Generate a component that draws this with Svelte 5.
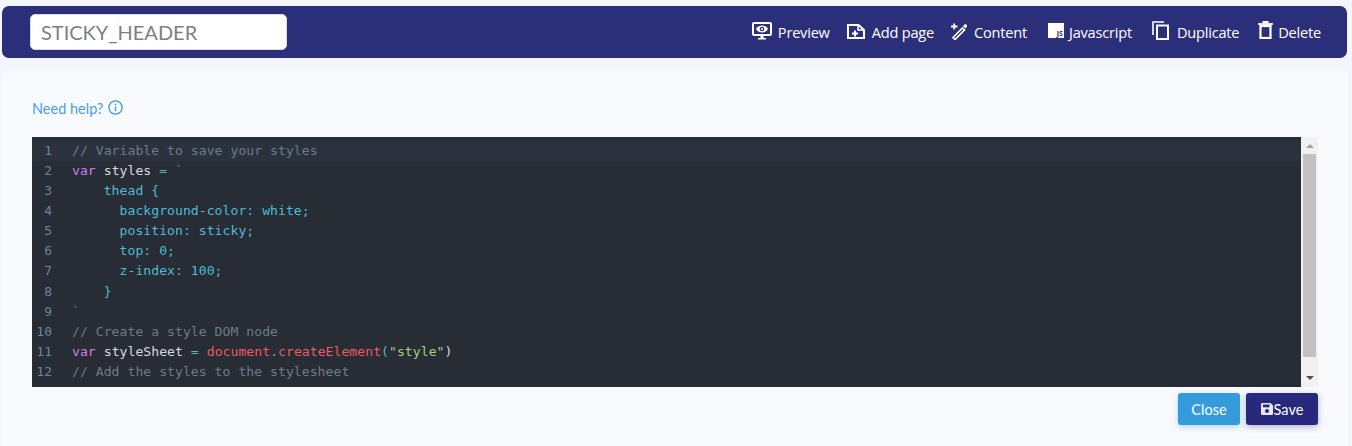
<script>
  const actions = ['Preview', 'Add page', 'Content', 'Javascript', 'Duplicate', 'Delete'];
</script>

<div class="page">
  <header class="topbar">
    <input class="name" value="STICKY_HEADER" />
    <nav class="actions">
      <a class="action preview" href="#p">
        <svg width="20" height="18" viewBox="0 0 20 18">
          <rect x="1" y="1" width="18" height="12" rx="1" fill="none" stroke="#fff" stroke-width="2" />
          <path d="M4 7C5.500 4.400 8 3.500 10 3.500S14.500 4.400 16 7C14.500 9.600 12 10.500 10 10.500S5.500 9.600 4 7z" fill="#fff" />
          <circle cx="10" cy="7" r="2.300" fill="#2b2f7a" />
          <circle cx="10" cy="7" r="1.100" fill="#fff" />
          <path d="M8.500 14h3v2h2.500v1.500H6V16h2.500z" fill="#fff" />
        </svg>
        <span>{actions[0]}</span>
      </a>
      <a class="action add" href="#a">
        <svg width="18" height="15" viewBox="0 0 18 15">
          <path d="M1 1h10.500L17 6v8H1z" fill="none" stroke="#fff" stroke-width="2" />
          <path d="M11 1v5h6" fill="none" stroke="#fff" stroke-width="1.500" />
          <path d="M5 9.500h6M8 6.500v6" stroke="#fff" stroke-width="2" />
        </svg>
        <span>{actions[1]}</span>
      </a>
      <a class="action content" href="#c">
        <svg width="17" height="17" viewBox="0 0 17 17">
          <path d="M2 14.500L11.500 5l2 2L4 16.500z" fill="none" stroke="#fff" stroke-width="1.700" />
          <path d="M12 3l1.500-1.500a1 1 0 0 1 1.500 0l.8.8a1 1 0 0 1 0 1.500L14.500 5.500z" fill="#fff" />
          <path d="M0 3.500h6.500M3.200 .5v6" stroke="#fff" stroke-width="1.800" />
        </svg>
        <span>{actions[2]}</span>
      </a>
      <a class="action js" href="#j">
        <span class="js-icon">JS</span>
        <span>{actions[3]}</span>
      </a>
      <a class="action duplicate" href="#d">
        <svg width="17" height="19" viewBox="0 0 17 19">
          <path d="M1 14V1h11" fill="none" stroke="#fff" stroke-width="1.600" />
          <rect x="5" y="4.500" width="11" height="13.500" fill="none" stroke="#fff" stroke-width="2" />
        </svg>
        <span>{actions[4]}</span>
      </a>
      <a class="action delete" href="#x">
        <svg width="15" height="18" viewBox="0 0 15 18">
          <path d="M0 3h15" stroke="#fff" stroke-width="1.800" />
          <path d="M4.500 1h6" stroke="#fff" stroke-width="2" />
          <rect x="2.500" y="5" width="10" height="12" fill="none" stroke="#fff" stroke-width="2.200" />
        </svg>
        <span>{actions[5]}</span>
      </a>
    </nav>
  </header>

  <section class="panel">
    <div class="help">
      <span>Need help?</span>
      <svg width="15" height="15" viewBox="0 0 15 15">
        <circle cx="7.500" cy="7.500" r="6.600" fill="none" stroke="#3b9ae1" stroke-width="1.300" />
        <path d="M7.500 6.500v4.500" stroke="#3b9ae1" stroke-width="1.400" />
        <circle cx="7.500" cy="4.300" r="0.900" fill="#3b9ae1" />
      </svg>
    </div>

    <div class="editor">
      <div class="gutter">
        {#each Array(12) as _, i}
          <div class:active={i === 0}>{i + 1}</div>
        {/each}
      </div>
      <pre class="code"><div class="active"><i class="c">// Variable to save your styles</i></div><div><b class="k">var</b> styles <b class="o">=</b> <b class="c">`</b></div><div class="s">    thead &#123;</div><div class="s">      background-color: white;</div><div class="s">      position: sticky;</div><div class="s">      top: 0;</div><div class="s">      z-index: 100;</div><div class="s">    &#125;</div><div><b class="c">`</b></div><div><i class="c">// Create a style DOM node</i></div><div><b class="k">var</b> styleSheet <b class="o">=</b> <b class="r">document</b><b class="o">.</b><b class="r">createElement</b><b class="o">(</b><b class="g">"style"</b><b class="w">)</b></div><div><i class="c">// Add the styles to the stylesheet</i></div></pre>
      <div class="scrollbar">
        <span class="arrow up"></span>
        <div class="track"><div class="thumb"></div></div>
        <span class="arrow down"></span>
      </div>
    </div>

    <div class="buttons">
      <button class="btn close">Close</button>
      <button class="btn save">
        <svg width="12" height="12" viewBox="0 0 12 12">
          <path d="M0 1.200A1.200 1.200 0 0 1 1.200 0H9.500L12 2.500v8.300A1.200 1.200 0 0 1 10.800 12H1.200A1.200 1.200 0 0 1 0 10.800z" fill="#e8e9f5" />
          <rect x="2" y="1.500" width="6.500" height="2.800" fill="#272a7c" />
          <circle cx="6" cy="8" r="2" fill="#272a7c" />
        </svg>Save</button>
    </div>
  </section>
</div>

<style>
  :global(body) {
    margin: 0;
    background: #f4f6fb;
    font-family: "Open Sans", sans-serif;
  }

  .page {
    height: 446px;
    overflow: hidden;
    padding: 6px 5px 0 2px;
    box-sizing: border-box;
  }

  .topbar {
    height: 52px;
    background: #2b2f7a;
    border-radius: 7px;
    display: flex;
    align-items: center;
    justify-content: space-between;
    padding: 0 26px 0 28px;
  }

  .name {
    width: 257px;
    height: 36px;
    box-sizing: border-box;
    border: 1px solid #d5d8e6;
    border-radius: 5px;
    background: #fff;
    padding: 0 10px;
    font-family: "Lato", sans-serif;
    font-size: 20px;
    color: #7d7f85;
    outline: none;
  }

  .actions {
    display: flex;
    align-items: center;
  }

  .action {
    display: flex;
    align-items: center;
    color: #fff;
    text-decoration: none;
    font-size: 14.600px;
    letter-spacing: -0.220px;
  }

  .action svg {
    margin-top: -2px;
  }

  .preview { margin-right: 17px; gap: 6px; }
  .add { margin-right: 17px; gap: 7px; }
  .content { margin-right: 21px; gap: 6px; }
  .js { margin-right: 20px; gap: 5px; }
  .duplicate { margin-right: 19px; gap: 8px; }
  .delete { gap: 5px; }

  .duplicate svg, .delete svg {
    margin-top: -4px;
  }

  .js-icon {
    width: 16px;
    height: 15px;
    background: #fff;
    color: #2b2f7a;
    font-size: 7px;
    font-weight: 700;
    line-height: 9px;
    letter-spacing: 0;
    display: flex;
    align-items: flex-end;
    justify-content: flex-end;
    padding-right: 1px;
    box-sizing: border-box;
    margin-top: -3px;
  }

  .panel {
    margin-top: 12px;
    margin-right: -1px;
    height: 376px;
    background: #f9fafe;
    border-radius: 6px 6px 0 0;
    padding: 28px 30px 0 30px;
    box-sizing: border-box;
  }

  .help {
    display: flex;
    align-items: center;
    gap: 5px;
    height: 20px;
    color: #4a9fdf;
    font-family: "Lato", sans-serif;
    font-size: 14.500px;
  }

  .help svg {
    margin-top: -2px;
  }

  .editor {
    margin-top: 19px;
    height: 250px;
    background: #282c34;
    display: flex;
    font-family: "DejaVu Sans Mono", monospace;
    font-size: 13.100px;
    letter-spacing: 0.040px;
    line-height: 20.080px;
    overflow: hidden;
  }

  .gutter {
    width: 40px;
    flex: none;
    padding-top: 4px;
    color: #67879b;
    text-align: right;
    font-size: 13px;
    letter-spacing: 0;
  }

  .gutter div {
    padding-right: 20px;
  }

  .gutter .active, .code .active {
    background: #2c323d;
  }

  .code {
    flex: 1;
    margin: 0;
    padding: 4px 0 0;
    font: inherit;
    letter-spacing: inherit;
    color: #d5dbe2;
  }

  .code i, .code b {
    font-style: normal;
    font-weight: 400;
  }

  .c { color: #6b7b8c; }
  .k { color: #d07ee8; }
  .o { color: #56b6c2; }
  .s { color: #4dbdd4; }
  .r { color: #ec5a66; }
  .g { color: #a2d080; }
  .w { color: #d5dbe2; }

  .scrollbar {
    width: 17px;
    flex: none;
    background: #f1f1f1;
    display: flex;
    flex-direction: column;
    align-items: center;
  }

  .track {
    flex: 1;
    width: 100%;
  }

  .thumb {
    margin: 0 2px;
    height: 203px;
    background: #c1c1c1;
  }

  .arrow {
    flex: none;
    width: 0;
    height: 0;
    border-left: 4px solid transparent;
    border-right: 4px solid transparent;
  }

  .arrow.up {
    margin: 7px 0 6px;
    border-bottom: 4px solid #a3a3a3;
  }

  .arrow.down {
    margin: 5px 0 7px;
    border-top: 4px solid #505050;
  }

  .buttons {
    display: flex;
    justify-content: flex-end;
    gap: 6px;
    margin-top: 6px;
  }

  .btn {
    height: 32px;
    border: none;
    border-radius: 3px;
    color: #fff;
    font-family: "Lato", sans-serif;
    font-size: 14.500px;
    padding: 0;
  }

  .close {
    width: 62px;
    background: #369bdc;
    box-shadow: 0 2px 6px rgba(54, 155, 220, 0.35);
  }

  .save {
    width: 72px;
    background: #272a7c;
    box-shadow: 0 2px 6px rgba(39, 42, 124, 0.35);
    display: flex;
    align-items: center;
    justify-content: center;
    gap: 1px;
  }
</style>
